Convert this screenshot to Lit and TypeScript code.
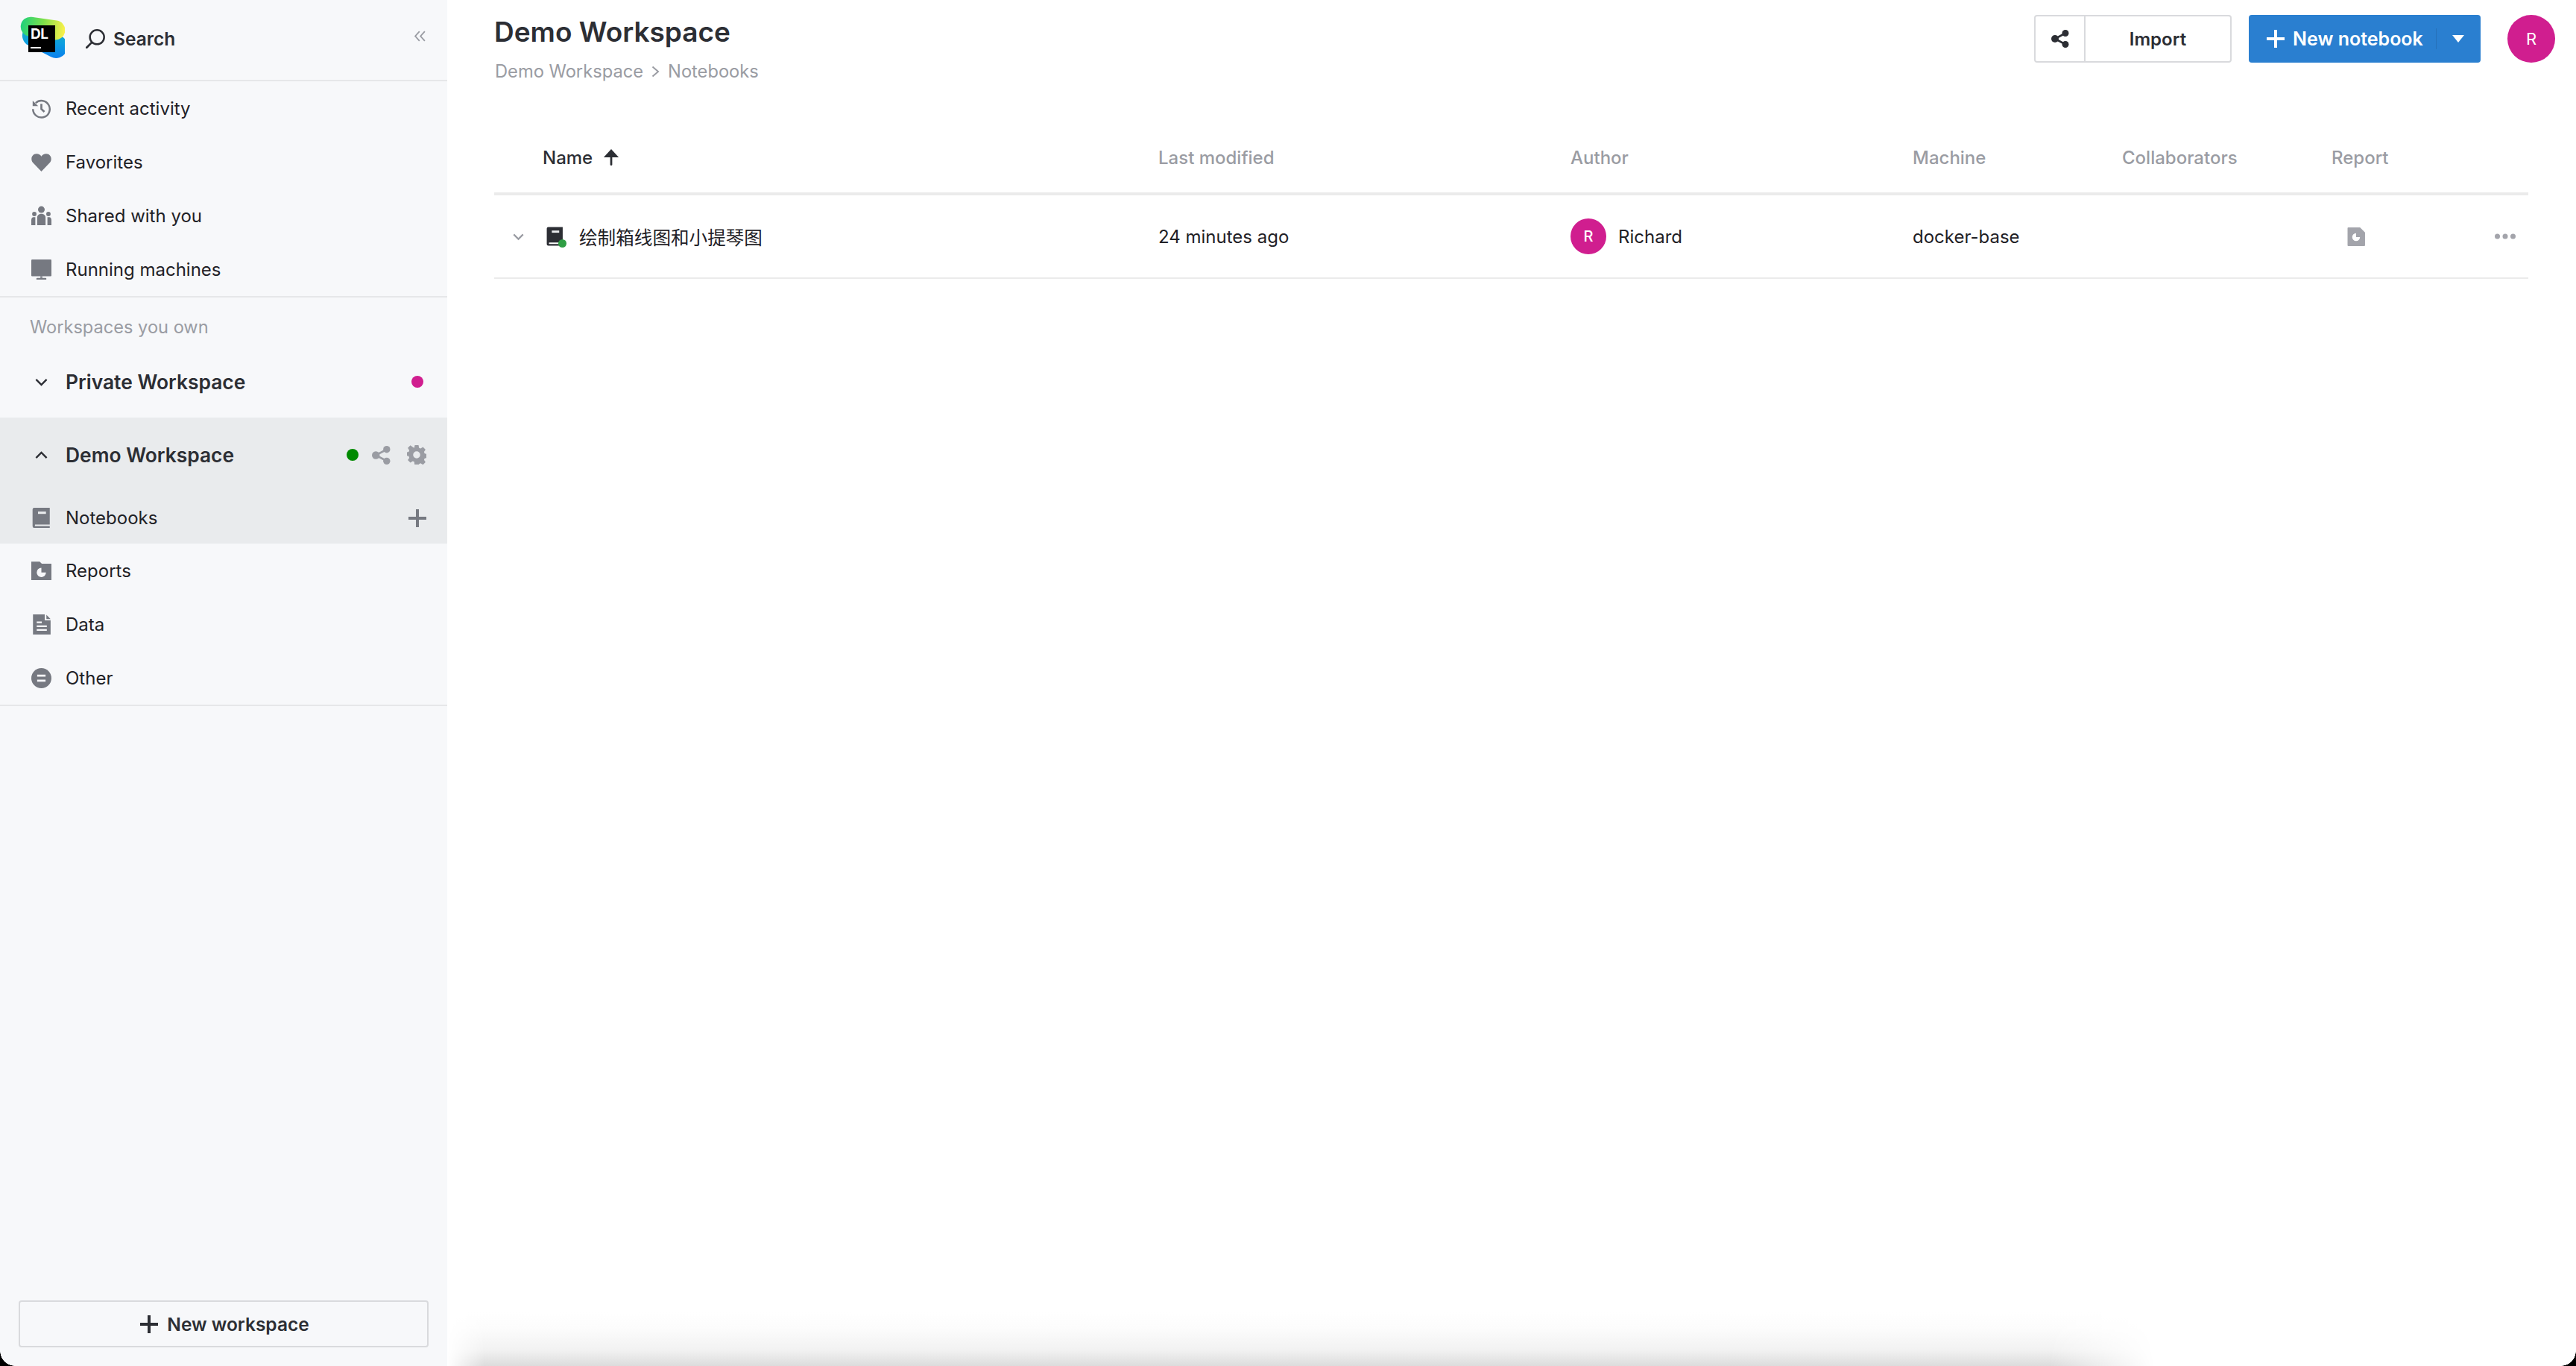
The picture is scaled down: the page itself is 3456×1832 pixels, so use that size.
import { LitElement, html, css, svg } from 'lit'
import { customElement } from 'lit/decorators.js'

const icon = (size: number, body: unknown, cls = 'ic') => html`<svg class=${cls} width=${size} height=${size} viewBox="0 0 24 24">${body}</svg>`

const icons = {
    history: svg`<path d="M5.2 5.4A10 10 0 1 1 2 12.6" fill="none" stroke="currentColor" stroke-width="2.2"/><path d="M1.6 2.6v6.6h6.6z" fill="currentColor"/><path d="M12 6.4v6.2l3.6 3.4" fill="none" stroke="currentColor" stroke-width="2.4"/>`,
    heart: svg`<path d="M12 23 1.8 12.4C-1.4 8.6.6 2 6.2 2 9 2 10.8 3.4 12 5c1.2-1.6 3-3 5.8-3 5.6 0 7.600 6.600 4.400 10.400z" fill="currentColor"/>`,
    people: svg`<circle cx="12" cy="4.500" r="4" fill="currentColor"/><circle cx="3.600" cy="9.800" r="2.600" fill="currentColor"/><circle cx="20.400" cy="9.800" r="2.600" fill="currentColor"/><path d="M7 23v-9c0-2.500 2-4.500 5-4.500s5 2 5 4.500v9z" fill="currentColor"/><path d="M0 23v-6c0-2 1-3.500 2.500-3.500h2.300V23zM24 23v-6c0-2-1-3.500-2.500-3.500h-2.300V23z" fill="currentColor"/>`,
    monitor: svg`<rect x="0" y="0" width="24" height="20" rx="1" fill="currentColor"/><rect x="10.800" y="20" width="2.400" height="2" fill="currentColor"/><rect x="6" y="22" width="12" height="2.200" rx="1" fill="currentColor"/>`,
    book: svg`<path d="M3.500 0H22v20H4.500a2 2 0 0 0 0 1.800H22V24H3.500A2 2 0 0 1 1.500 22V2a2 2 0 0 1 2-2z" fill="currentColor"/><rect x="8" y="4.500" width="9.500" height="2.800" fill="#e9ebed"/>`,
    folder: svg`<path d="M0 1h10l2.500 2.500H24V23H0z" fill="currentColor"/><path d="M12 8.500a5.500 5.500 0 1 0 5.500 5.500H12z" fill="#f7f8fa"/>`,
    file: svg`<path d="M2 0h14v7h7v17H2z" fill="currentColor"/><path d="M18 .5l5 5h-5z" fill="currentColor"/><path d="M6.500 9.500h6M6.500 14h12M6.500 18.500h12" stroke="#f7f8fa" stroke-width="2"/>`,
    other: svg`<circle cx="12" cy="12" r="12" fill="currentColor"/><path d="M7 9h10M7 15h10" stroke="#f7f8fa" stroke-width="2.600"/>`,
    share: svg`<circle cx="19" cy="4.500" r="4.500" fill="currentColor"/><circle cx="19" cy="19.500" r="4.500" fill="currentColor"/><circle cx="5" cy="12" r="5" fill="currentColor"/><path d="M19 4.500 5 12l14 7.500" fill="none" stroke="currentColor" stroke-width="2.600"/>`,
    gear: svg`<path fill-rule="evenodd" fill="currentColor" d="M9.700 0h4.600l.7 3.400 1.900.8 2.900-1.900 3.200 3.200-1.900 2.900.8 1.900 3.400.7v4.600l-3.400.7-.8 1.900 1.900 2.900-3.200 3.200-2.900-1.900-1.900.8-.7 3.400H9.700L9 20.600l-1.900-.8-2.900 1.900L1 18.500l1.900-2.900-.8-1.900L-1.300 13V9l3.400-.7.800-1.900L1 3.500l3.200-3.200 2.900 1.900L9 3.400zM12 7.600a4.400 4.400 0 1 0 0 8.800 4.400 4.400 0 0 0 0-8.800z"/>`,
    plus: svg`<path d="M12 0v24M0 12h24" stroke="currentColor" stroke-width="4" fill="none"/>`,
    search: svg`<circle cx="14" cy="10" r="8.800" fill="none" stroke="currentColor" stroke-width="2.300"/><path d="M7.500 16.500 1 23" stroke="currentColor" stroke-width="2.600" stroke-linecap="round"/>`,
    collapse: svg`<path d="M11 3 3 12l8 9M21 3l-8 9 8 9" fill="none" stroke="currentColor" stroke-width="2.600"/>`,
    down: svg`<path d="M2 7l10 10L22 7" fill="none" stroke="currentColor" stroke-width="3.400"/>`,
    up: svg`<path d="M2 17 12 7l10 10" fill="none" stroke="currentColor" stroke-width="3.400"/>`,
    arrowUp: svg`<path d="M12 0 1 12h22z" fill="currentColor"/><rect x="10.500" y="8" width="3" height="16" rx="1.500" fill="currentColor"/>`,
    report: svg`<path d="M1.500 0h15L23 6.500V23a1 1 0 0 1-1 1H1.500a1 1 0 0 1-1-1V1a1 1 0 0 1 1-1z" fill="currentColor"/><path d="M11.500 7.500a5 5 0 1 0 5 5h-5z" fill="#fff"/>`,
    dots: svg`<circle cx="3" cy="12" r="3" fill="currentColor"/><circle cx="12" cy="12" r="3" fill="currentColor"/><circle cx="21" cy="12" r="3" fill="currentColor"/>`,
}

@customElement('app-root')
export class AppRoot extends LitElement {
    static styles = css`
        :host {
            display: block;
            position: relative;
            height: 1832px;
            overflow: hidden;
            background: #fff;
            color: #1f2126;
            font-family: Inter, "Noto Sans CJK SC", sans-serif;
            font-size: 24px;
        }
        .ic { display: block; flex: none; }
        .page { display: flex; height: 100%; }

        .side {
            width: 600px;
            flex: none;
            display: flex;
            flex-direction: column;
            background: #f7f8fa;
        }
        .side-head {
            height: 109px;
            box-sizing: border-box;
            display: flex;
            align-items: center;
            padding: 0 28px 3px 25px;
            border-bottom: 2px solid #e6e7e9;
        }
        .logo { position: relative; width: 62px; height: 62px; flex: none; }
        .logo svg { position: absolute; inset: 0; }
        .logo-mark {
            position: absolute;
            left: 13px;
            top: 13px;
            width: 36px;
            height: 36px;
            box-sizing: border-box;
            padding: 2px 0 0 3px;
            background: #000;
            color: #fff;
            font-size: 19px;
            line-height: 20px;
            font-weight: 700;
            letter-spacing: -.5px;
        }
        .logo-mark i { display: block; width: 14px; height: 2px; margin-top: 7px; background: #fff; }
        .search {
            display: flex;
            align-items: center;
            gap: 11px;
            margin-left: 28px;
            font-size: 24.500px;
            font-weight: 600;
            color: #2c2e34;
        }
        .collapse { margin-left: auto; color: #9a9ca3; margin-top: -8px; }

        .rows { border-bottom: 2px solid #e6e7e9; }
        .row {
            height: 72px;
            display: flex;
            align-items: center;
            gap: 19px;
            padding: 0 28px 0 42px;
        }
        .row .lead { color: #767981; }
        .row-block { background: #e9ebed; }
        .row-head { height: 100px; font-size: 26.400px; font-weight: 600; color: #2c2e34; }
        .row-notebooks { height: 69px; }
        .row-private { font-size: 26.400px; font-weight: 600; color: #2c2e34; margin-bottom: 12px; }
        .label { height: 77px; box-sizing: border-box; padding: 25px 0 0 40px; line-height: 30px; font-size: 23.600px; color: #9a9ca3; }
        .chev { color: #2c2e34; width: 27px; display: flex; justify-content: center; }
        .right { margin-left: auto; display: flex; align-items: center; gap: 22px; color: #9a9ca3; }
        .dot { width: 16px; height: 16px; border-radius: 50%; display: block; }
        .pink { background: #d01e8f; margin-right: 4px; }
        .green { background: #008a00; margin-right: -4px; }
        .add { color: #767981; }

        .new-ws {
            margin: auto 25px 25px;
            height: 63px;
            display: flex;
            align-items: center;
            justify-content: center;
            gap: 12px;
            box-sizing: border-box;
            border: 2px solid #d9dadd;
            border-radius: 4px;
            padding-left: 3px;
            font-size: 24.500px;
            font-weight: 600;
            color: #2c2e34;
        }

        .main { flex: 1; min-width: 0; padding: 0 64px 0 63px; }
        .head { height: 164px; display: flex; align-items: flex-start; justify-content: space-between; }
        .title { font-size: 37px; line-height: 48px; font-weight: 600; color: #2c2e34; margin-top: 19px; }
        .crumbs { display: flex; align-items: center; gap: 11px; margin-top: 14px; line-height: 30px; font-size: 23.700px; color: #9a9ca3; padding-left: 1px; }
        .actions { display: flex; align-items: center; margin-top: 20px; }
        .import {
            display: flex;
            width: 265px;
            height: 64px;
            box-sizing: border-box;
            border: 2px solid #d9dadd;
            border-radius: 4px;
            font-weight: 600;
            color: #2c2e34;
        }
        .import-share { width: 65px; display: flex; align-items: center; justify-content: center; border-right: 2px solid #d9dadd; }
        .import-label { flex: 1; display: flex; align-items: center; justify-content: center; }
        .primary {
            display: flex;
            width: 311px;
            height: 64px;
            margin-left: 23px;
            background: #2a7fd0;
            color: #fff;
            border-radius: 4px;
            font-size: 25px;
            font-weight: 600;
        }
        .primary-main { width: 251px; display: flex; align-items: center; gap: 11px; padding-left: 24px; box-sizing: border-box; }
        .primary-drop { flex: 1; display: flex; align-items: center; justify-content: center; position: relative; }
        .primary-drop::before { content: ''; position: absolute; left: 0; top: 18px; bottom: 18px; width: 1px; background: #2671b9; }
        .caret { width: 0; height: 0; border: 8px solid transparent; border-top: 10px solid #fff; border-bottom: 0; }
        .avatar {
            border-radius: 50%;
            background: #d01e8f;
            color: #fff;
            display: flex;
            align-items: center;
            justify-content: center;
        }
        .avatar-lg { width: 64px; height: 64px; margin-left: 36px; margin-right: -36px; font-size: 22px; }
        .avatar-sm { width: 48px; height: 48px; font-size: 20px; font-weight: 500; }

        .grid { display: grid; grid-template-columns: 891px 553px 459px 281px 281px 190px 74px; align-items: center; }
        .thead { height: 94px; border-bottom: 4px solid #ebebeb; color: #9a9ca3; font-weight: 500; }
        .name-head { display: flex; align-items: center; gap: 14px; padding-left: 65px; color: #2c2e34; }
        .tbody { height: 110px; border-bottom: 2px solid #ebebeb; color: #1f2126; }
        .name { display: flex; align-items: center; padding-left: 25px; }
        .name .fold { color: #9a9ca3; margin-right: 29px; }
        .nb { position: relative; width: 25px; height: 28px; color: #2c2e34; margin-right: 20px; }
        .nb .ic { width: 25px; height: 28px; }
        .nb::after {
            content: '';
            position: absolute;
            right: -3px;
            bottom: -1px;
            width: 11px;
            height: 11px;
            border-radius: 50%;
            background: #2f9e44;
        }
        .cjk { font-size: 24.600px; color: #1f2126; }
        .author { display: flex; align-items: center; gap: 16px; }
        .report { color: #a3a4ab; padding-left: 21px; }
        .more { color: #a3a4ab; padding-left: 29px; }

        .fade {
            position: absolute;
            left: 600px;
            width: 2290px;
            bottom: 0;
            height: 72px;
            background: linear-gradient(to top, #dcdcdc, #f2f2f2 30%, #fcfcfc 70%, #ffffff);
            -webkit-mask-image: linear-gradient(to right, transparent, #000 50px, #000 2150px, transparent);
            mask-image: linear-gradient(to right, transparent, #000 50px, #000 2150px, transparent);
        }
        .corner { position: absolute; bottom: 0; width: 20px; height: 20px; }
        .corner-l { left: 0; background: radial-gradient(circle at top right, transparent 19.500px, #000 20px); }
        .corner-r { right: 0; background: radial-gradient(circle at top left, transparent 19.500px, #000 20px); }
    `

    private _row(lead: unknown, label: string) {
        return html`<div class="row"><span class="lead">${icon(27, lead)}</span><span>${label}</span></div>`
    }

    protected override render() {
        return html`
            <div class="page">
                <aside class="side">
                    <div class="side-head">
                        <div class="logo">
                            <svg width="62" height="62" viewBox="0 0 62 62">
                                <defs>
                                    <linearGradient id="lg-top" x1="0" x2="1" y1="0" y2="0">
                                        <stop offset="0" stop-color="#1fd07a"/>
                                        <stop offset=".5" stop-color="#7fe04a"/>
                                        <stop offset="1" stop-color="#fff14a"/>
                                    </linearGradient>
                                    <linearGradient id="lg-low" x1="0" x2="1" y1="0" y2="1">
                                        <stop offset="0" stop-color="#22b8a8"/>
                                        <stop offset=".55" stop-color="#0d9fe0"/>
                                        <stop offset="1" stop-color="#0a78f0"/>
                                    </linearGradient>
                                </defs>
                                <rect x="0" y="17" width="64" height="31" rx="15" fill="url(#lg-low)" transform="rotate(27 31 40)"/>
                                <rect x="3" y="4" width="60" height="26" rx="13" fill="url(#lg-top)" transform="rotate(8 32 14)"/>
                            </svg>
                            <div class="logo-mark">DL<i></i></div>
                        </div>
                        <div class="search">${icon(26, icons.search)}<span>Search</span></div>
                        <span class="collapse">${icon(17, icons.collapse)}</span>
                    </div>

                    <div class="rows">
                        ${this._row(icons.history, 'Recent activity')}
                        ${this._row(icons.heart, 'Favorites')}
                        ${this._row(icons.people, 'Shared with you')}
                        ${this._row(icons.monitor, 'Running machines')}
                    </div>

                    <div class="label">Workspaces you own</div>
                    <div class="row row-private">
                        <span class="chev">${icon(17, icons.down)}</span>
                        <span>Private Workspace</span>
                        <span class="right"><i class="dot pink"></i></span>
                    </div>

                    <div class="rows">
                        <div class="row-block">
                            <div class="row row-head">
                                <span class="chev">${icon(17, icons.up)}</span>
                                <span>Demo Workspace</span>
                                <span class="right">
                                    <i class="dot green"></i>
                                    ${icon(25, icons.share)}
                                    ${icon(26, icons.gear)}
                                </span>
                            </div>
                            <div class="row row-notebooks">
                                <span class="lead">${icon(27, icons.book)}</span>
                                <span>Notebooks</span>
                                <span class="right add">${icon(24, icons.plus)}</span>
                            </div>
                        </div>
                        ${this._row(icons.folder, 'Reports')}
                        ${this._row(icons.file, 'Data')}
                        ${this._row(icons.other, 'Other')}
                    </div>

                    <div class="new-ws">${icon(24, icons.plus)}<span>New workspace</span></div>
                </aside>

                <main class="main">
                    <header class="head">
                        <div>
                            <div class="title">Demo Workspace</div>
                            <div class="crumbs">
                                <span>Demo Workspace</span>
                                <svg class="ic" width="11" height="16" viewBox="0 0 11 16"><path d="M1.500 1.500 9 8l-7.500 6.500" fill="none" stroke="currentColor" stroke-width="2"/></svg>
                                <span>Notebooks</span>
                            </div>
                        </div>
                        <div class="actions">
                            <div class="import">
                                <span class="import-share">${icon(24, icons.share)}</span>
                                <span class="import-label">Import</span>
                            </div>
                            <div class="primary">
                                <span class="primary-main">${icon(24, icons.plus)}<span>New notebook</span></span>
                                <span class="primary-drop"><i class="caret"></i></span>
                            </div>
                            <div class="avatar avatar-lg">R</div>
                        </div>
                    </header>

                    <div class="grid thead">
                        <div class="name-head"><span>Name</span>${icon(22, icons.arrowUp)}</div>
                        <div>Last modified</div>
                        <div>Author</div>
                        <div>Machine</div>
                        <div>Collaborators</div>
                        <div>Report</div>
                    </div>
                    <div class="grid tbody">
                        <div class="name">
                            <span class="fold">${icon(15, icons.down)}</span>
                            <span class="nb">${icon(25, icons.book)}</span>
                            <span class="cjk">绘制箱线图和小提琴图</span>
                        </div>
                        <div>24 minutes ago</div>
                        <div class="author"><span class="avatar avatar-sm">R</span><span>Richard</span></div>
                        <div>docker-base</div>
                        <div></div>
                        <div class="report">${icon(25, icons.report)}</div>
                        <div class="more">${icon(28, icons.dots)}</div>
                    </div>
                </main>
            </div>
            <div class="fade"></div>
            <div class="corner corner-l"></div>
            <div class="corner corner-r"></div>
        `
    }
}
